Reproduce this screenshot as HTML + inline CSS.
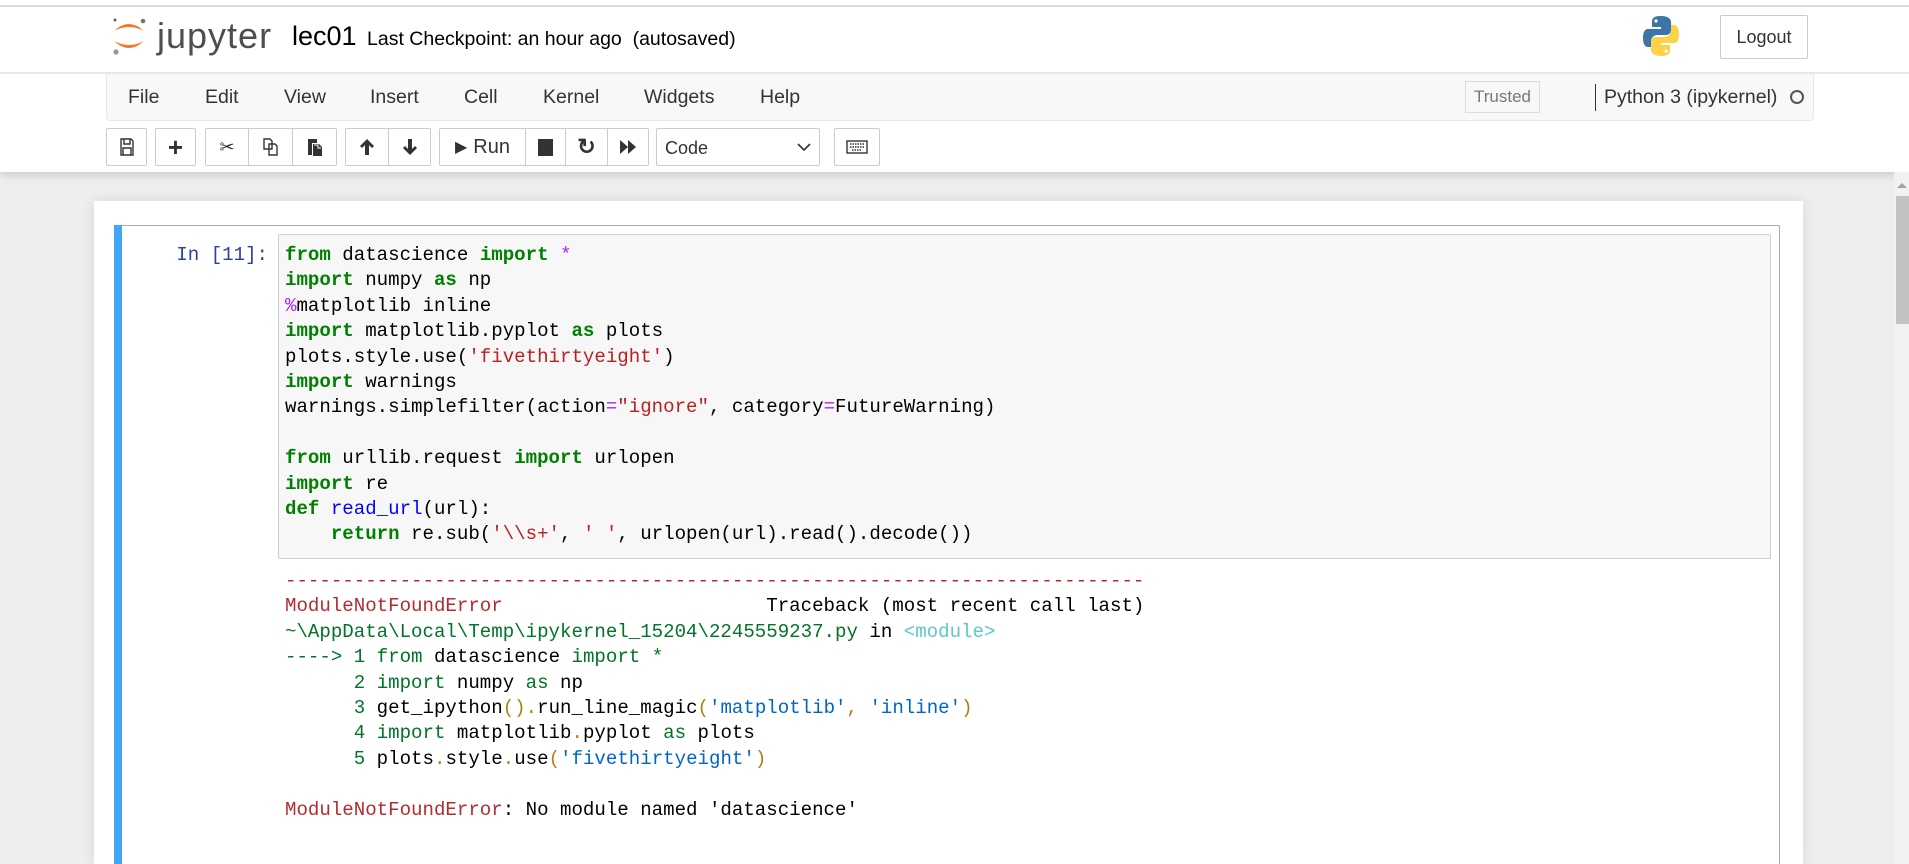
<!DOCTYPE html>
<html style="width:1909px;height:864px;overflow:hidden"><head><meta charset="utf-8"><style>
*{margin:0;padding:0;box-sizing:border-box}
body{width:1909px;height:864px;overflow:hidden;background:#eee;font-family:"Liberation Sans",sans-serif;position:relative}
.a{position:absolute}
#top{left:0;top:0;width:1909px;height:172px;background:#fff;box-shadow:0 3px 8px rgba(0,0,0,.15)}
.btn{position:absolute;top:128px;height:38px;border:1px solid #ccc;border-radius:2px;background:#fff;display:flex;align-items:center;justify-content:center;color:#333}
.menu{position:absolute;top:86px;font-size:19.5px;color:#333}
.code{position:absolute;left:285px;font-family:"Liberation Mono",monospace;font-size:19.1px;line-height:25.4px;white-space:pre;color:#000}
.k{color:#008000;font-weight:bold}.s{color:#ba2121}.o{color:#aa22ff}.f{color:#0000ff}
.r{color:#b22b31}.g{color:#007427}.c{color:#60c6c8}.b{color:#0065ca}.y{color:#b27d12}
</style></head><body>
<div id="top" class="a"></div>
<div class="a" style="left:0;top:5px;width:1909px;height:2px;background:#ddd"></div>
<div class="a" style="left:0;top:72px;width:1909px;height:2px;background:#e7e7e7"></div>
<svg class="a" style="left:110px;top:15px" width="40" height="42" viewBox="0 0 40 42">
<path d="M4 16 Q19 2 34 16 Q19 8 4 16Z" fill="#f37726"/>
<path d="M4 26 Q19 40 34 26 Q19 34 4 26Z" fill="#f37726"/>
<circle cx="33" cy="6" r="2.3" fill="#767677"/><circle cx="6" cy="37" r="2.6" fill="#989798"/><circle cx="5" cy="5" r="1.5" fill="#616262"/>
</svg>
<div class="a" style="left:157px;top:15px;font-size:36px;color:#4e4e4e;letter-spacing:1px">jupyter</div>
<div class="a" style="left:292px;top:21px;font-size:27px;color:#000">lec01</div>
<div class="a" style="left:367px;top:28px;font-size:19.5px;color:#000">Last Checkpoint: an hour ago &nbsp;(autosaved)</div>
<svg class="a" style="left:1643px;top:15px" width="36" height="42" viewBox="0 0 36 42">
<path d="M18 1c-8 0-9 3-9 6v5h9v2H5c-3 0-5 3-5 9s2 9 5 9h3v-6c0-3 3-6 6-6h9c3 0 5-2 5-5V7c0-3-3-6-10-6z" fill="#3c74a8"/>
<path d="M18 41c8 0 9-3 9-6v-5h-9v-2h13c3 0 5-3 5-9s-2-9-5-9h-3v6c0 3-3 6-6 6h-9c-3 0-5 2-5 5v8c0 3 3 6 10 6z" fill="#fdd244"/>
<circle cx="13" cy="6" r="1.6" fill="#fff"/><circle cx="23" cy="36" r="1.6" fill="#fff"/>
</svg>
<div class="a" style="left:1720px;top:15px;width:88px;height:44px;border:1px solid #ccc;border-radius:2px;display:flex;align-items:center;justify-content:center;font-size:18px;color:#333">Logout</div>
<div class="a" style="left:106px;top:74px;width:1708px;height:47px;background:#f8f8f8;border:1px solid #e7e7e7;border-top:none;border-radius:0 0 4px 4px"></div>
<div class="menu" style="left:128px">File</div><div class="menu" style="left:205px">Edit</div><div class="menu" style="left:284px">View</div><div class="menu" style="left:370px">Insert</div><div class="menu" style="left:464px">Cell</div><div class="menu" style="left:543px">Kernel</div><div class="menu" style="left:644px">Widgets</div><div class="menu" style="left:760px">Help</div>
<div class="a" style="left:1465px;top:81px;width:75px;height:32px;border:1px solid #ddd;font-size:17px;color:#777;display:flex;align-items:center;justify-content:center">Trusted</div>
<div class="a" style="left:1595px;top:84px;width:1px;height:27px;background:#333"></div>
<div class="a" style="left:1604px;top:86px;font-size:19.5px;color:#333">Python 3 (ipykernel)</div>
<div class="a" style="left:1790px;top:90px;width:14px;height:14px;border:2.5px solid #555;border-radius:50%"></div>
<div class="btn" style="left:106px;width:41px"><svg width="14" height="18" viewBox="0 0 14 18"><path d="M1 1h10l2 2v14H1z M4 1v5h6V1 M3 10h8v7H3z" fill="none" stroke="#333" stroke-width="1.4"/></svg></div>
<div class="btn" style="left:155px;width:41px;font-size:26px;font-weight:bold">+</div>
<div class="btn" style="left:205px;width:44px;border-radius:2px 0 0 2px;font-size:18px">&#9986;</div>
<div class="btn" style="left:248px;width:45px;border-radius:0"><svg width="16" height="18" viewBox="0 0 16 18"><path d="M1 1h6l2 2v8H1z M6 6h6l2 2v9H6z" fill="#fff" stroke="#333" stroke-width="1.4"/></svg></div>
<div class="btn" style="left:292px;width:45px;border-radius:0 2px 2px 0"><svg width="16" height="19" viewBox="0 0 16 19"><path d="M1 1h9v4H5v12H1z" fill="#333"/><path d="M6 6h6l3 3v9H6z" fill="#333"/><path d="M7 7h4v3h3" fill="none" stroke="#fff" stroke-width="1"/></svg></div>
<div class="btn" style="left:345px;width:44px;border-radius:2px 0 0 2px"><svg width="16" height="18" viewBox="0 0 16 18"><path d="M8 1L1 8l2 2 3-3v10h4V7l3 3 2-2z" fill="#333"/></svg></div>
<div class="btn" style="left:388px;width:43px;border-radius:0 2px 2px 0"><svg width="16" height="18" viewBox="0 0 16 18"><path d="M8 17L1 10l2-2 3 3V1h4v10l3-3 2 2z" fill="#333"/></svg></div>
<div class="btn" style="left:439px;width:87px;border-radius:2px 0 0 2px;font-size:20px"><span style="font-size:16px;margin-right:6px">&#9654;</span>Run</div>
<div class="btn" style="left:525px;width:41px;border-radius:0"><div style="width:15px;height:17px;background:#333"></div></div>
<div class="btn" style="left:565px;width:43px;border-radius:0;font-size:22px;font-weight:bold">&#8635;</div>
<div class="btn" style="left:607px;width:42px;border-radius:0 2px 2px 0"><svg width="18" height="16" viewBox="0 0 18 16"><path d="M1 1l8 7-8 7z M9 1l8 7-8 7z" fill="#333"/></svg></div>
<div class="btn" style="left:656px;width:164px;justify-content:space-between;padding:0 8px;font-size:18px"><span style="margin-top:3px">Code</span><svg width="14" height="9" viewBox="0 0 14 9"><path d="M1 1l6 6 6-6" fill="none" stroke="#333" stroke-width="1.6"/></svg></div>
<div class="btn" style="left:834px;width:46px"><svg width="22" height="14" viewBox="0 0 22 14"><rect x="1" y="1" width="20" height="12" fill="none" stroke="#333" stroke-width="1.4"/><path d="M4 4h14M4 7h14M6 10h10" stroke="#333" stroke-width="1.4" stroke-dasharray="1.5 1"/></svg></div>
<div class="a" style="left:94px;top:201px;width:1709px;height:663px;background:#fff;box-shadow:0 0 12px rgba(0,0,0,.1)"></div>
<div class="a" style="left:1894px;top:172px;width:15px;height:692px;background:#f1f1f1"></div>
<div class="a" style="left:1897px;top:183px;width:0;height:0;border-left:5px solid transparent;border-right:5px solid transparent;border-bottom:5px solid #a3a3a3"></div>
<div class="a" style="left:1896px;top:196px;width:13px;height:128px;background:#c1c1c1"></div>
<div class="a" style="left:114px;top:225px;width:1666px;height:639px;border:1px solid #ababab;border-bottom:none;border-radius:2px 2px 0 0"></div>
<div class="a" style="left:114px;top:225px;width:8px;height:639px;background:#42a5f5"></div>
<div class="a" style="left:278px;top:234px;width:1493px;height:325px;background:#f7f7f7;border:1px solid #cfcfcf;border-radius:2px"></div>
<div class="a" style="left:150px;top:243px;width:118px;text-align:right;font-family:'Liberation Mono',monospace;font-size:19.1px;line-height:25.4px;color:#303f9f;white-space:pre">In [11]:</div>
<div class="code" style="top:243px"><span class="k">from</span> datascience <span class="k">import</span> <span class="o">*</span>
<span class="k">import</span> numpy <span class="k">as</span> np
<span class="o">%</span>matplotlib inline
<span class="k">import</span> matplotlib.pyplot <span class="k">as</span> plots
plots.style.use(<span class="s">'fivethirtyeight'</span>)
<span class="k">import</span> warnings
warnings.simplefilter(action<span class="o">=</span><span class="s">"ignore"</span>, category<span class="o">=</span>FutureWarning)

<span class="k">from</span> urllib.request <span class="k">import</span> urlopen
<span class="k">import</span> re
<span class="k">def</span> <span class="f">read_url</span>(url):
    <span class="k">return</span> re.sub(<span class="s">'\\s+'</span>, <span class="s">' '</span>, urlopen(url).read().decode())</div>
<div class="code" style="top:569px"><span class="r">---------------------------------------------------------------------------</span>
<span class="r">ModuleNotFoundError</span>                       Traceback (most recent call last)
<span class="g">~\AppData\Local\Temp\ipykernel_15204\2245559237.py</span> in <span class="c">&lt;module&gt;</span>
<span class="g">----&gt; 1</span> <span class="g">from</span> datascience <span class="g">import</span> <span class="g">*</span>
<span class="g">      2</span> <span class="g">import</span> numpy <span class="g">as</span> np
<span class="g">      3</span> get_ipython<span class="y">()</span><span class="y">.</span>run_line_magic<span class="y">(</span><span class="b">'matplotlib'</span><span class="y">,</span> <span class="b">'inline'</span><span class="y">)</span>
<span class="g">      4</span> <span class="g">import</span> matplotlib<span class="y">.</span>pyplot <span class="g">as</span> plots
<span class="g">      5</span> plots<span class="y">.</span>style<span class="y">.</span>use<span class="y">(</span><span class="b">'fivethirtyeight'</span><span class="y">)</span>

<span class="r">ModuleNotFoundError</span>: No module named 'datascience'</div>
</body></html>
